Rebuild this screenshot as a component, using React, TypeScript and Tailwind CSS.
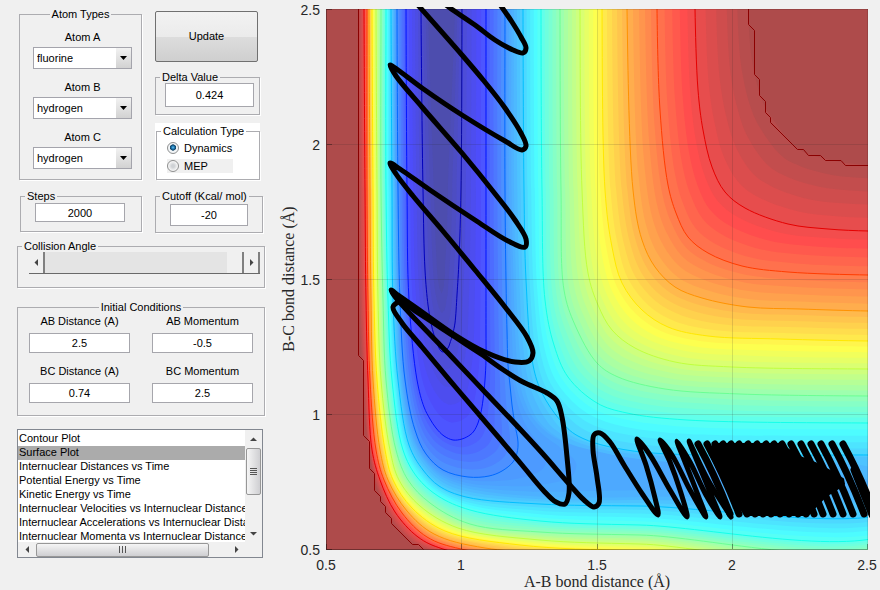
import { useState } from "react";
import type { ReactNode } from "react";
import clsx from "clsx";

type Point = [number, number];

interface Level {
  at: number;
  outer: Point[];
  inner: Point[];
}

const ATOMS = ["fluorine", "hydrogen", "chlorine", "deuterium"];

const PLOTS = [
  "Contour Plot",
  "Surface Plot",
  "Internuclear Distances vs Time",
  "Potential Energy vs Time",
  "Kinetic Energy vs Time",
  "Internuclear Velocities vs Internuclear Distance",
  "Internuclear Accelerations vs Internuclear Distance",
  "Internuclear Momenta vs Internuclear Distance",
];

// Equipotential curves of the surface, lowest last. "outer" runs down the repulsive
// wall and along the bottom, "inner" follows the dissociation plateau.
const LEVELS: Level[] = [
  {
    at: 11,
    outer: [[358, -20], [358, 9], [358, 190], [359, 300], [363, 380], [368, 445], [376, 485], [391, 520], [408, 540], [423, 549], [560, 590], [900, 600]],
    inner: [[748, -20], [748, 9], [752, 60], [762, 100], [772, 118], [797, 148], [815, 156], [840, 162], [855, 164], [868, 165], [900, 165]],
  },
  {
    at: 10,
    outer: [[364, -20], [364, 9], [365, 190], [366, 300], [368, 380], [372, 450], [380, 480], [395, 512], [418, 537], [443, 549], [560, 570], [900, 580]],
    inner: [[695, -20], [695, 9], [698, 90], [703, 130], [712, 167], [725, 192], [745, 208], [788, 224], [828, 229], [868, 231], [900, 231]],
  },
  {
    at: 9,
    outer: [[367, -20], [367, 9], [367, 190], [368, 300], [370, 380], [376, 450], [384, 480], [402, 513], [427, 537], [461, 549], [580, 562], [900, 570]],
    inner: [[657, -20], [657, 9], [660, 110], [668, 185], [676, 213], [688, 237], [708, 253], [742, 266], [788, 272], [868, 275], [900, 275]],
  },
  {
    at: 8,
    outer: [[369, -20], [369, 9], [370, 190], [371, 300], [373, 380], [380, 450], [388, 480], [407, 511], [434, 534], [485, 548], [610, 555], [900, 562]],
    inner: [[627, -20], [627, 9], [633, 190], [642, 240], [655, 267], [675, 287], [702, 298], [748, 307], [800, 309], [868, 311], [900, 311]],
  },
  {
    at: 7,
    outer: [[372, -20], [372, 9], [373, 190], [374, 300], [377, 380], [385, 450], [393, 480], [412, 508], [445, 531], [520, 545], [640, 551], [900, 554]],
    inner: [[602, -20], [602, 9], [605, 190], [612, 247], [622, 283], [642, 310], [668, 327], [708, 336], [780, 339], [868, 341], [900, 341]],
  },
  {
    at: 6,
    outer: [[376, -20], [376, 9], [377, 190], [378, 300], [381, 380], [390, 450], [399, 480], [420, 506], [458, 528], [540, 540], [640, 544], [900, 547]],
    inner: [[580, -20], [580, 9], [582, 190], [588, 273], [598, 305], [612, 330], [635, 348], [675, 362], [732, 367], [868, 369], [900, 369]],
  },
  {
    at: 5,
    outer: [[381, -20], [381, 9], [381, 190], [383, 300], [386, 380], [396, 450], [408, 480], [430, 503], [470, 524], [540, 532], [640, 535], [900, 538]],
    inner: [[560, -20], [560, 9], [561, 190], [564, 290], [575, 325], [597, 363], [618, 377], [665, 389], [740, 394], [868, 396], [900, 396]],
  },
  {
    at: 4,
    outer: [[386, -20], [386, 9], [386, 190], [388, 300], [392, 380], [403, 450], [417, 477], [438, 496], [470, 510], [540, 521], [640, 525], [900, 527]],
    inner: [[541, -20], [541, 9], [542, 190], [545, 300], [554, 345], [568, 377], [597, 403], [627, 413], [687, 420], [868, 423], [900, 423]],
  },
  {
    at: 3,
    outer: [[391, -20], [391, 9], [392, 190], [393, 300], [398, 380], [409, 445], [423, 470], [439, 486], [466, 497], [540, 504], [640, 506], [900, 507]],
    inner: [[523, -20], [523, 9], [524, 190], [526, 280], [533, 365], [542, 393], [560, 420], [578, 436], [633, 451], [868, 455], [900, 455]],
  },
  {
    at: 2.5,
    outer: [[394, -20], [394, 9], [395, 190], [397, 300], [401, 380], [412, 438], [425, 462], [441, 478], [466, 488], [530, 496], [640, 497], [880, 487]],
    inner: [[514, -20], [514, 9], [514, 190], [516, 280], [519, 345], [523, 380], [530, 405], [543, 426], [575, 446], [680, 464], [870, 480]],
  },
  {
    at: 2.25,
    outer: [[395, -20], [395, 9], [396, 190], [398, 300], [403, 380], [413, 434], [425, 458], [442, 474], [467, 483], [505, 486], [540, 485], [572, 476]],
    inner: [[509, -20], [509, 9], [509, 190], [511, 280], [512, 335], [514, 372], [519, 396], [527, 415], [540, 432], [562, 449], [576, 463]],
  },
  {
    at: 2,
    outer: [[397, -20], [397, 9], [398, 190], [400, 300], [405, 380], [415, 430], [426, 454], [443, 470], [468, 477], [489, 476], [502, 471], [513, 462]],
    inner: [[505, -20], [505, 9], [505, 190], [506, 280], [507, 330], [508, 365], [510, 385], [512, 405], [515, 425], [518, 442], [517, 453]],
  },
  {
    at: 1,
    outer: [[406, -20], [406, 9], [407, 190], [409, 300], [417, 380], [424, 407], [430, 419], [436, 428], [444, 436], [453, 440], [462, 439], [470, 435]],
    inner: [[486, -20], [486, 9], [486, 190], [486, 280], [486, 330], [486, 360], [485, 380], [483, 400], [481, 412], [478, 423], [474, 431]],
  },
  {
    at: 0,
    outer: [[421, -20], [421, 9], [423, 190], [425, 270], [428, 305], [431, 323], [434, 335], [437, 343], [439, 348], [441, 351], [443, 352], [446, 350]],
    inner: [[462, -20], [462, 9], [461, 190], [459, 260], [457, 295], [455, 323], [453, 333], [451, 340], [450, 343], [449, 346], [448, 348]],
  },
  {
    at: -0.5,
    outer: [[428, -20], [428, 9], [434, 190], [436, 250], [437, 270], [438, 280], [439, 286], [440, 290], [441, 292], [441, 293], [442, 293], [442, 292]],
    inner: [[455, -20], [455, 9], [448, 190], [447, 230], [446, 250], [445, 265], [445, 275], [444, 282], [444, 286], [443, 289], [443, 291]],
  },
];

const PRODUCT_PATH: Point[] = [
  [501, 6], [512, 22], [521, 37], [526, 48], [523, 53], [513, 50], [495, 40], [475, 25], [450, 8], [440, 0],
];

const REACTION_PATH: Point[] = [
  [417, 4], [462, 55], [484, 81], [505, 108], [521, 133], [526, 146], [522, 150], [505, 141], [462, 115], [422, 88],
  [398, 70], [390, 65], [396, 76], [422, 107], [462, 153], [496, 195], [515, 220], [526, 239], [525, 247], [508, 241],
  [475, 220], [430, 190], [400, 169], [390, 163], [396, 174], [413, 196], [442, 230], [475, 270], [505, 307], [527, 337],
  [533, 353], [529, 361], [515, 362], [485, 352], [455, 335], [418, 309], [398, 295], [391, 290], [396, 298], [418, 322],
  [448, 353], [483, 390], [520, 429], [543, 454], [570, 485], [584, 500], [594, 507], [599, 503], [597, 477], [593, 450],
  [594, 435], [600, 433], [610, 442], [624, 465], [643, 495], [658, 515], [655, 498], [646, 465], [637, 439], [650, 455],
  [670, 490], [687, 517], [680, 490], [670, 462], [660, 440], [672, 455], [690, 490], [706, 517], [698, 495], [685, 462],
  [677, 441], [690, 462], [706, 495], [720, 517], [707, 485], [689, 441], [708, 480], [731, 517],
];

const TURNING_PATH: Point[] = [
  [484, 356], [455, 337], [418, 313], [400, 302], [393, 307], [402, 323], [422, 347], [458, 390], [500, 439], [522, 465],
  [543, 490], [556, 502], [565, 504], [569, 493], [567, 457], [562, 417], [557, 401], [547, 393], [523, 382], [502, 369], [484, 356],
];

// Upper turning points of the reactant vibration where the strands run together.
const STRANDS = [698, 707, 715, 723, 731, 739, 748, 757, 766, 774, 782, 791, 801, 811, 821, 832, 843];

const X_TICKS = [
  { x: 326, label: "0.5" },
  { x: 461, label: "1" },
  { x: 597, label: "1.5" },
  { x: 732, label: "2" },
  { x: 867, label: "2.5" },
];

const Y_TICKS = [
  { y: 9, label: "2.5" },
  { y: 144, label: "2" },
  { y: 279, label: "1.5" },
  { y: 414, label: "1" },
  { y: 549, label: "0.5" },
];

function jet(level: number) {
  const t = 0.06 + level * 0.084;
  const channel = (center: number) =>
    Math.max(0, Math.min(1, 1.5 - Math.abs(4 * t - center)));
  return [channel(3), channel(2), channel(1)];
}

function lineColor(level: number) {
  return `rgb(${jet(level).map((c) => Math.round(c * 255)).join(",")})`;
}

function fillColor(level: number) {
  return `rgb(${jet(level).map((c) => Math.round(77 + c * 178)).join(",")})`;
}

function smooth(points: Point[]) {
  let d = `M${points[0][0]} ${points[0][1]}`;
  for (let i = 0; i < points.length - 1; i++) {
    const a = points[Math.max(0, i - 1)];
    const b = points[i];
    const c = points[i + 1];
    const e = points[Math.min(points.length - 1, i + 2)];
    // Centripetal tangents keep the curve from overshooting at uneven spacing.
    const ab = Math.sqrt(Math.hypot(b[0] - a[0], b[1] - a[1])) || 1;
    const bc = Math.sqrt(Math.hypot(c[0] - b[0], c[1] - b[1])) || 1;
    const ce = Math.sqrt(Math.hypot(e[0] - c[0], e[1] - c[1])) || 1;
    const control = [0, 1].map((k) => {
      const m1 = (ab * ab * (c[k] - b[k]) + bc * bc * (b[k] - a[k])) / (ab * (ab + bc));
      const m2 = (ce * ce * (c[k] - b[k]) + bc * bc * (e[k] - c[k])) / (ce * (ce + bc));
      return [b[k] + m1 / 3, c[k] - m2 / 3];
    });
    d += `C${control[0][0].toFixed(1)} ${control[1][0].toFixed(1)} ${control[0][1].toFixed(1)} ${control[1][1].toFixed(1)} ${c[0]} ${c[1]}`;
  }
  return d;
}

function mix(a: Point[], b: Point[], f: number): Point[] {
  return a.map((p, i) => [p[0] + (b[i][0] - p[0]) * f, p[1] + (b[i][1] - p[1]) * f]);
}

function outline(outer: Point[], inner: Point[]) {
  return smooth([...outer, ...[...inner].reverse()]);
}

function buildBands() {
  const bands: { d: string; fill: string }[] = [];
  for (let i = 0; i < LEVELS.length - 1; i++) {
    const hi = LEVELS[i];
    const lo = LEVELS[i + 1];
    const steps = Math.max(2, Math.round((hi.at - lo.at) * 5));
    for (let s = 0; s < steps; s++) {
      const f = s / steps;
      const level = hi.at + (lo.at - hi.at) * ((s + 0.5) / steps);
      bands.push({
        d: outline(mix(hi.outer, lo.outer, f), mix(hi.inner, lo.inner, f)),
        fill: fillColor(level),
      });
    }
  }
  const last = LEVELS[LEVELS.length - 1];
  bands.push({ d: outline(last.outer, last.inner), fill: "#4d4dae" });
  return bands;
}

const BANDS = buildBands();
const LINES = LEVELS.filter((l) => Number.isInteger(l.at) && l.at < 11);

function SurfacePlot() {
  return (
    <svg viewBox="275 0 605 590" className="block h-auto w-full" role="img" aria-label="Potential energy surface">
      <defs>
        <clipPath id="axes">
          <rect x="326" y="9" width="542" height="541" />
        </clipPath>
        <clipPath id="trace">
          <rect x="324" y="7" width="546" height="545" />
        </clipPath>
      </defs>

      <g clipPath="url(#axes)">
        <rect x="326" y="9" width="542" height="541" fill="#ae4b4b" />
        {BANDS.map((band, i) => (
          <path key={i} d={band.d} fill={band.fill} />
        ))}
        {LINES.map((l) => (
          <path key={l.at} d={outline(l.outer, l.inner)} fill="none" stroke={lineColor(l.at)} />
        ))}
        <g fill="none" stroke="#8b0000">
          <path d="M358.5 9V355.500L363.500 360.500V435.500L369.500 441.500V468.500L374.500 473.500V490.500L380.500 496.500V501.500L385.500 506.500V512.500L391.500 518.500V523.500L412.500 544.500H418.500L423.500 549.500" />
          <path d="M748.500 9V24.500L754.500 30.500V74.500L759.500 79.500V95.500L765.500 101.500V112.500L770.500 117.500V122.500L797.500 149.500H803.500L808.500 155.500H820.500L825.500 160.500H841L845.500 165.500H868" />
        </g>
        <g stroke="#262626" strokeOpacity="0.15">
          {X_TICKS.slice(1, 4).map((t) => (
            <path key={t.x} d={`M${t.x + 0.5} 9V549`} />
          ))}
          {Y_TICKS.slice(1, 4).map((t) => (
            <path key={t.y} d={`M326 ${t.y + 0.5}H868`} />
          ))}
        </g>
        <g stroke="#000" strokeOpacity="0.35">
          <path d="M326.500 9V550M326 549.500H868" />
          {X_TICKS.map((t) => (
            <path key={t.x} d={`M${t.x + 0.5} 549V544`} />
          ))}
          {Y_TICKS.map((t) => (
            <path key={t.y} d={`M327 ${t.y + 0.5}H332`} />
          ))}
        </g>
        <path d="M326 9.500H868M867.500 9V549" stroke="#000" strokeOpacity="0.12" />
      </g>

      <g clipPath="url(#trace)" fill="none" stroke="#000" strokeWidth="5" strokeLinecap="round" strokeLinejoin="round">
        <path d={smooth(PRODUCT_PATH)} />
        <path d={smooth(REACTION_PATH)} />
        <path d={smooth(TURNING_PATH)} />
        <g strokeWidth="7">
          {STRANDS.map((x) => (
            <path key={x} d={`M${x} 444Q${x + 17} 475 ${x + 32} 514`} />
          ))}
          <path d="M854 470L872 515" />
        </g>
        <path
          d="M708 450L716 444H780L800 457L815 463L832 472L843 479L844 484L836 490L826 496L818 504L808 515H745L726 486Z"
          fill="#000"
          strokeWidth="2"
        />
      </g>

      <g fill="#262626" fontSize="14" className="font-['Liberation_Sans',Arial,sans-serif]">
        {X_TICKS.map((t) => (
          <text key={t.x} x={t.x} y="570" textAnchor="middle">{t.label}</text>
        ))}
        {Y_TICKS.map((t) => (
          <text key={t.y} x="320" y={t.y + 6} textAnchor="end">{t.label}</text>
        ))}
      </g>
      <g fill="#262626" fontSize="16" textAnchor="middle" className="font-['Liberation_Serif','Times_New_Roman',serif]">
        <text x="597" y="587">A-B bond distance (Å)</text>
        <text transform="translate(294 279) rotate(-90)">B-C bond distance (Å)</text>
      </g>
    </svg>
  );
}

function Group({ title, className, center, children }: {
  title: string;
  className?: string;
  center?: boolean;
  children: ReactNode;
}) {
  return (
    <fieldset className="min-w-0 border border-[#acacb0] shadow-[1px_1px_0_#fff]">
      <legend className={clsx("h-3 px-0.5 leading-3 whitespace-nowrap", center ? "mx-auto" : "ml-1")}>{title}</legend>
      <div className={className}>{children}</div>
    </fieldset>
  );
}

function AtomSelect({ label, initial, className }: { label: string; initial: string; className?: string }) {
  return (
    <label className={clsx("block", className)}>
      <span className="block text-center leading-3">{label}</span>
      <span className="relative mt-1 block h-[22px] border border-[#a4a4ac] bg-white">
        <select defaultValue={initial} className="h-full w-full appearance-none bg-transparent pl-[3px] outline-none">
          {ATOMS.map((atom) => (
            <option key={atom}>{atom}</option>
          ))}
        </select>
        <span className="pointer-events-none absolute inset-y-0 right-0 flex w-[15px] items-center justify-center bg-linear-to-b from-[#f2f2f2] to-[#d2d2d2]">
          <svg width="7" height="4" viewBox="0 0 7 4"><path d="M0 0H7L3.500 4Z" /></svg>
        </span>
      </span>
    </label>
  );
}

function NumberBox({ label, initial, className }: { label: string; initial: string; className?: string }) {
  return (
    <input
      aria-label={label}
      defaultValue={initial}
      className={clsx("block border border-[#a6a6ac] bg-white text-center outline-none", className)}
    />
  );
}

function Field({ label, initial }: { label: string; initial: string }) {
  return (
    <label className="block">
      <span className="block text-center leading-3">{label}</span>
      <input
        defaultValue={initial}
        className="mt-1.5 block h-5 w-full border border-[#a6a6ac] bg-white text-center outline-none"
      />
    </label>
  );
}

function Radio({ label, checked, onChange, className }: {
  label: string;
  checked: boolean;
  onChange: () => void;
  className?: string;
}) {
  return (
    <label className={clsx("flex h-[14px] items-center gap-[5px]", className)}>
      <input
        type="radio"
        name="calculation"
        checked={checked}
        onChange={onChange}
        className="size-3 appearance-none rounded-full border border-[#8e8f8f] bg-[radial-gradient(circle,#cfd2d5_20%,#f6f6f6_65%)] checked:bg-[radial-gradient(circle_at_50%_45%,#6cc4ee_0,#1c78b4_20%,#12405f_38%,#f2f5f7_46%)]"
      />
      {label}
    </label>
  );
}

function Arrow({ d }: { d: string }) {
  return (
    <svg width="7" height="7" viewBox="0 0 7 7" fill="#444"><path d={d} /></svg>
  );
}

const UP = "M0 5L3.500 1.500L7 5Z";
const DOWN = "M0 2L3.500 5.500L7 2Z";
const LEFT = "M5 0L1.500 3.500L5 7Z";
const RIGHT = "M2 0L5.500 3.500L2 7Z";

function PlotList() {
  return (
    <div className="mt-[13px] mr-0.5 grid grid-cols-[1fr_17px] border border-[#828790] bg-[#f0f0f0]">
      <select
        size={8}
        defaultValue="Surface Plot"
        aria-label="Plot type"
        className="h-[112px] w-full min-w-0 appearance-none overflow-hidden bg-white pt-0.5 outline-none"
      >
        {PLOTS.map((plot) => (
          <option
            key={plot}
            className="h-[14px] min-h-0 overflow-hidden p-0 pl-px leading-[14px] text-black checked:bg-[linear-gradient(#ababab,#ababab)]"
          >
            {plot}
          </option>
        ))}
      </select>
      <div className="flex flex-col items-center">
        <button aria-label="Scroll up" className="flex h-[18px] items-center"><Arrow d={UP} /></button>
        <div className="flex h-[47px] w-[15px] flex-col items-center justify-center gap-px rounded-xs border border-[#979797] bg-linear-to-r from-[#f5f5f5] to-[#cfcfd2]">
          <i className="h-px w-[7px] bg-[#555]" />
          <i className="h-px w-[7px] bg-[#555]" />
          <i className="h-px w-[7px] bg-[#555]" />
          <i className="h-px w-[7px] bg-[#555]" />
        </div>
        <button aria-label="Scroll down" className="mt-auto flex h-[18px] items-center"><Arrow d={DOWN} /></button>
      </div>
      <div className="flex h-[15px] items-center">
        <button aria-label="Scroll left" className="flex w-[18px] justify-center"><Arrow d={LEFT} /></button>
        <div className="flex h-[14px] w-[173px] items-center justify-center gap-0.5 rounded-xs border border-[#979797] bg-linear-to-b from-[#f5f5f5] to-[#cfcfd2]">
          <i className="h-[7px] w-px bg-[#555]" />
          <i className="h-[7px] w-px bg-[#555]" />
          <i className="h-[7px] w-px bg-[#555]" />
        </div>
        <button aria-label="Scroll right" className="ml-auto flex w-[18px] justify-center"><Arrow d={RIGHT} /></button>
      </div>
    </div>
  );
}

export default function App() {
  const [mode, setMode] = useState("Dynamics");
  const [angle, setAngle] = useState(180);

  return (
    <main className="flex min-h-screen items-start bg-[#f0f0f0] font-['Liberation_Sans',Arial,sans-serif] text-[11px] text-black">
      <section className="w-[275px] shrink-0 pt-2 pr-[10px] pl-[17px]">
        <div className="grid grid-cols-[123px_1fr] gap-[13px] pr-[7px] pl-0.5">
          <Group title="Atom Types" center className="pr-[9px] pb-2.5 pl-[13px]">
            <AtomSelect label="Atom A" initial="fluorine" className="pt-[11px]" />
            <AtomSelect label="Atom B" initial="hydrogen" className="pt-3" />
            <AtomSelect label="Atom C" initial="hydrogen" className="pt-3" />
          </Group>
          <div className="pt-[3px]">
            <button className="block h-[51px] w-[103px] rounded-xs border border-[#707070] bg-[linear-gradient(#f2f2f2,#ebebeb_50%,#dddddd_50%,#cfcfcf)]">
              Update
            </button>
            <div className="mt-[9px]">
              <Group title="Delta Value" className="pr-[5px] pb-[7px] pl-[9px]">
                <NumberBox label="Delta Value" initial="0.424" className="h-6 w-[89px]" />
              </Group>
            </div>
            <div className="mt-2 bg-white pt-0.5 pl-px">
              <Group title="Calculation Type" className="pt-1 pb-1.5 pl-[10px]">
                <Radio label="Dynamics" checked={mode === "Dynamics"} onChange={() => setMode("Dynamics")} />
                <Radio
                  label="MEP"
                  checked={mode === "MEP"}
                  onChange={() => setMode("MEP")}
                  className="mt-1 w-[66px] bg-[#f0f0f0]"
                />
              </Group>
            </div>
          </div>
        </div>

        <div className="mt-2.5 grid grid-cols-[122px_1fr] items-start gap-[13px] pr-0.5 pl-[3px]">
          <Group title="Steps" className="px-[14px] pt-px pb-[9px]">
            <NumberBox label="Steps" initial="2000" className="h-[19px] w-[90px]" />
          </Group>
          <Group title="Cutoff (Kcal/ mol)" className="px-[14px] pt-0.5 pb-1.5">
            <NumberBox label="Cutoff" initial="-20" className="h-[22px] w-[83px] max-w-full" />
          </Group>
        </div>

        <div className="mt-[7px]">
          <Group title="Collision Angle" className="pr-1 pb-[13px] pl-[11px]">
            <div className="flex h-[22px] border-b border-[#696969]">
              <button aria-label="Decrease angle" className="flex w-4 items-center justify-center border-r-2 border-[#808080]">
                <Arrow d={LEFT} />
              </button>
              <input
                type="range"
                min="0"
                max="180"
                value={angle}
                onChange={(e) => setAngle(Number(e.target.value))}
                aria-label="Collision Angle"
                className="h-full min-w-0 flex-1 appearance-none bg-[#e4e4e4] [&::-webkit-slider-thumb]:h-[21px] [&::-webkit-slider-thumb]:w-[17px] [&::-webkit-slider-thumb]:appearance-none [&::-webkit-slider-thumb]:border-r-2 [&::-webkit-slider-thumb]:border-[#808080] [&::-webkit-slider-thumb]:bg-[#f0f0f0]"
              />
              <button aria-label="Increase angle" className="flex w-4 items-center justify-center border-r-2 border-[#808080]">
                <Arrow d={RIGHT} />
              </button>
            </div>
          </Group>
        </div>

        <div className="mt-[13px]">
          <Group title="Initial Conditions" center className="px-[11px] pt-0.5 pb-3">
            <div className="grid grid-cols-2 gap-x-[22px] gap-y-3">
              <Field label="AB Distance (A)" initial="2.5" />
              <Field label="AB Momentum" initial="-0.5" />
              <Field label="BC Distance (A)" initial="0.74" />
              <Field label="BC Momentum" initial="2.5" />
            </div>
          </Group>
        </div>

        <PlotList />
      </section>

      <section className="min-w-0 flex-1">
        <SurfacePlot />
      </section>
    </main>
  );
}
